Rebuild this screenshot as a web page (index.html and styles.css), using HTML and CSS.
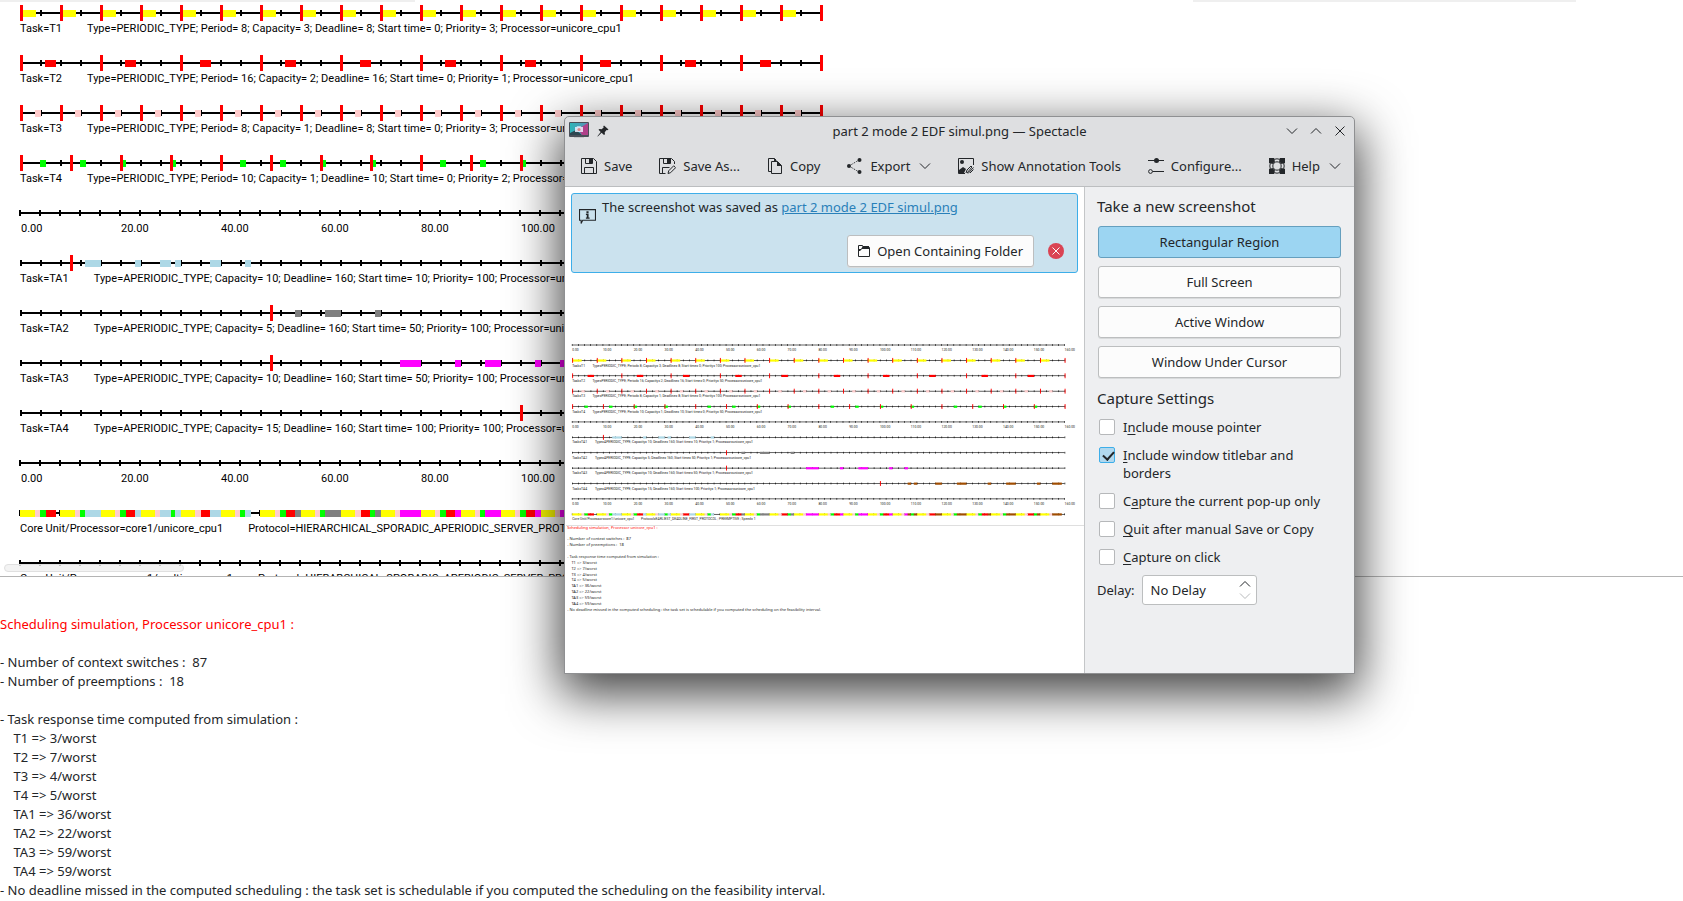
FILE: index.html
```html
<!DOCTYPE html>
<html lang="en">
<head>
<meta charset="utf-8">
<title>Scheduling simulation</title>
<link rel="stylesheet" href="styles.css">
</head>
<body>
<main class="desktop">
  <section class="chart-pane" aria-label="Scheduling chart">
    <div class="top-strip"><span class="strip-left"></span><span class="strip-right"></span></div>
    <div class="chart" id="chart"></div>
    <div class="scroll-thumb"></div>
  </section>
  <section class="report" aria-label="Simulation report">
    <p class="report-title">Scheduling simulation, Processor unicore_cpu1 :</p>
    <pre class="report-text" id="report">
- Number of context switches :  87
- Number of preemptions :  18

- Task response time computed from simulation :
    T1 =&gt; 3/worst
    T2 =&gt; 7/worst
    T3 =&gt; 4/worst
    T4 =&gt; 5/worst
    TA1 =&gt; 36/worst
    TA2 =&gt; 22/worst
    TA3 =&gt; 59/worst
    TA4 =&gt; 59/worst
- No deadline missed in the computed scheduling : the task set is schedulable if you computed the scheduling on the feasibility interval.</pre>
  </section>

  <div class="window" role="dialog" aria-label="Spectacle">
    <header class="titlebar">
      <div class="title-side">
        <svg class="app-icon" viewBox="0 0 20 17" aria-hidden="true">
          <defs><linearGradient id="sky" x1="0" x2="1"><stop offset="0" stop-color="#2fb5b8"/><stop offset="1" stop-color="#5a8fb5"/></linearGradient></defs>
          <rect x="5" y="14" width="10" height="2" fill="#c4c6c8"/>
          <rect width="20" height="15" rx="1" fill="#4a4f58"/>
          <rect x="1" y="1" width="18" height="12" fill="url(#sky)"/>
          <path d="M1 13V11L7 8l6 5z" fill="#2d4650"/><path d="M19 1v12h-6L9 7z" fill="#b0408a"/>
          <path d="M6 5h1.500l.6-.8h3.600l.6.800H14v5H6z" fill="#eef" opacity=".85"/><circle cx="10" cy="7.500" r="1.600" fill="#d88"/>
        </svg>
        <svg class="pin-icon" viewBox="0 0 12 12" aria-hidden="true"><path d="M7 0.500L11.500 4.500 10.300 5.300 9.600 5 7.700 7.300 8 9.300 7 10 4.600 7.800 0.800 11.500 0.400 11.200 3.700 7 1.500 4.800 2.500 4 4.700 4.300 6.800 2.300 6.200 1.400z" fill="#232629"/></svg>
      </div>
      <h1 class="title">part 2 mode 2 EDF simul.png — Spectacle</h1>
      <div class="title-buttons">
        <button type="button" aria-label="Minimize"><svg viewBox="0 0 12 12"><path d="M1 3.500l5 5 5-5"/></svg></button>
        <button type="button" aria-label="Maximize"><svg viewBox="0 0 12 12"><path d="M1 8.500l5-5 5 5"/></svg></button>
        <button type="button" aria-label="Close"><svg viewBox="0 0 12 12"><path d="M1.500 1.500l9 9M10.500 1.500l-9 9"/></svg></button>
      </div>
    </header>
    <nav class="toolbar">
      <button type="button"><svg viewBox="0 0 16 16"><path d="M.5.5h12l3 3v12H.5zM4.500.5v5h7v-5M3.500 15.500v-6h9v6"/><path class="solid" d="M8 1h3v4H8z"/></svg>Save</button>
      <button type="button"><svg viewBox="0 0 17 16"><path d="M6.500 15.500H.5V.5h12l3 3V6M4.500.5v5h7v-5M3.500 15.500v-6h7M9 15.500l.7-2.700 5-5 1.900 1.900-5 5z"/><path class="solid" d="M8 1h3v4H8z"/></svg>Save As...</button>
      <button type="button"><svg viewBox="0 0 16 16"><path d="M4.500 13.500H1.500V.5h6l1.500 1.500M4.500 3.500h6l4 4v8h-10z"/><path class="solid" d="M10 3l5 5h-5zM7 0l3 3H7z"/></svg>Copy</button>
      <button type="button"><svg viewBox="0 0 16 16"><path class="dots" d="M2 8L12 2M2 8l10 6"/><circle class="solid" cx="2" cy="8" r="2"/><circle class="solid" cx="12.500" cy="2" r="2"/><circle class="solid" cx="12.500" cy="14" r="2"/></svg>Export<svg class="chevron" viewBox="0 0 12 12"><path d="M1 3.500l5 5 5-5"/></svg></button>
      <button type="button"><svg viewBox="0 0 16 16"><path d="M7 15.500H.5V.5h15V7"/><circle class="solid" cx="4" cy="4" r="2"/><path class="solid" d="M1 15v-3l4-3 3 2-2 4z"/><path d="M8 15l1-3 4-4 1 1-5 6M10 15.500l5.500-6M12 15l3.500-3.500"/></svg>Show Annotation Tools</button>
      <button type="button"><svg viewBox="0 0 16 16"><path d="M0 2.500h16M4.500 13.500H16"/><circle class="solid" cx="8.500" cy="2.500" r="2.500"/><circle cx="2.500" cy="13.500" r="1.900"/></svg>Configure...</button>
      <button type="button"><svg viewBox="0 0 16 16"><circle cx="8" cy="8" r="7.200"/><circle cx="8" cy="8" r="4.200"/><path class="solid" d="M0 0h5l1 3.500L3.500 6 0 5zM16 0v5l-3.500 1L10 3.500 11 0zM0 16v-5l3.500-1L6 12.500 5 16zM16 16h-5l-1-3.500L12.500 10l3.500 1z"/></svg>Help<svg class="chevron" viewBox="0 0 12 12"><path d="M1 3.500l5 5 5-5"/></svg></button>
    </nav>
    <div class="window-body">
      <div class="preview">
        <div class="banner">
          <svg class="info-icon" viewBox="0 0 16 16" aria-hidden="true"><path d="M.5 1.500h15v10h-12l-1.500 3V11.500H.5z" fill="none" stroke="#232629"/><path d="M7 3h2v2H7zM6.500 5.500H9V9h1v1H6.500V9h.8V6.500h-.8z" fill="#232629"/></svg>
          <div class="banner-main">
            <p class="banner-text">The screenshot was saved as <a href="#">part 2 mode 2 EDF simul.png</a></p>
            <div class="banner-actions">
              <button type="button" class="push folder-button"><svg viewBox="0 0 12 12" aria-hidden="true"><path d="M.5.5h4l1 2h6v9H.5z" fill="none" stroke="#232629"/><path d="M5 1h6v3H4L2 6H0V4h3z" fill="#232629"/></svg>Open Containing Folder</button>
              <button type="button" class="dismiss" aria-label="Close message"><svg viewBox="0 0 16 16"><circle cx="8" cy="8" r="8" fill="#da4453"/><path d="M4.500 4.500l7 7M11.500 4.500l-7 7" stroke="#fcfcfc"/></svg></button>
            </div>
          </div>
        </div>
        <div class="thumbnail" id="thumbnail"></div>
      </div>
      <aside class="sidebar">
        <h2>Take a new screenshot</h2>
        <div class="modes">
          <button type="button" class="push selected">Rectangular Region</button>
          <button type="button" class="push">Full Screen</button>
          <button type="button" class="push">Active Window</button>
          <button type="button" class="push">Window Under Cursor</button>
        </div>
        <h2>Capture Settings</h2>
        <div class="options">
          <label><input type="checkbox"><span>I<u>n</u>clude mouse pointer</span></label>
          <label><input type="checkbox" checked><span><u>I</u>nclude window titlebar and borders</span></label>
          <label><input type="checkbox"><span>C<u>a</u>pture the current pop-up only</span></label>
          <label><input type="checkbox"><span><u>Q</u>uit after manual Save or Copy</span></label>
          <label><input type="checkbox"><span><u>C</u>apture on click</span></label>
        </div>
        <div class="delay">
          <label for="delay">Delay:</label>
          <div class="spin">
            <input id="delay" type="text" value="No Delay">
            <div class="spin-buttons">
              <button type="button" aria-label="Increase"><svg viewBox="0 0 12 8"><path d="M1 6.500l5-5 5 5"/></svg></button>
              <button type="button" aria-label="Decrease" disabled><svg viewBox="0 0 12 8"><path d="M1 1.500l5 5 5-5"/></svg></button>
            </div>
          </div>
        </div>
      </aside>
    </div>
  </div>
</main>
<script src="chart.js"></script>
</body>
</html>
```
FILE: styles.css
```css
* { box-sizing: border-box; }

body {
  margin: 0;
  background: #fff;
  color: #232629;
  font: 13px/18px "Noto Sans", "Open Sans", sans-serif;
}

h1, h2, p, pre { margin: 0; font: inherit; }

button, input { font: inherit; color: inherit; }

button { padding: 0; border: 0; background: none; }

svg { display: block; flex: none; }

.desktop {
  position: relative;
  min-height: 100vh;
  overflow: hidden;
}

/* Chart pane */
.chart-pane {
  position: relative;
  height: 577px;
  overflow: hidden;
  border-bottom: 1px solid #b4b4b4;
}

.top-strip {
  display: flex;
  justify-content: space-between;
  height: 2px;
  padding-right: 107px;
}

.strip-left { width: 415px; background: #efefef; }
.strip-right { width: 383px; background: #efefef; }

.chart { color: #000; font: 11px/16px Roboto, "Noto Sans", sans-serif; }

.row { height: 50px; }

.track { width: 100%; height: 19px; overflow: visible; shape-rendering: crispEdges; }

.caption {
  display: flex;
  gap: 25px;
  padding-left: 20px;
  white-space: nowrap;
}

.scale { display: flex; padding-left: 21px; }
.scale span { flex: 0 0 100px; }

.scroll-thumb {
  position: absolute;
  left: 4px;
  bottom: 4px;
  width: 180px;
  height: 8px;
  border: 1px solid #e0e0e0;
  border-radius: 4px;
  background: rgba(240, 240, 240, .8);
}

/* Report */
.report {
  padding: 38px 0 0 0;
  line-height: 19px;
}

.report-title { color: #f00; margin-bottom: 19px; }

/* Spectacle window */
.window {
  position: absolute;
  left: 564px;
  top: 116px;
  width: 791px;
  height: 558px;
  display: flex;
  flex-direction: column;
  border: 1px solid #8f9092;
  border-radius: 5px 5px 0 0;
  background: #dedfe1;
  box-shadow: 0 16px 50px 4px rgba(0, 0, 0, .75);
  background-clip: padding-box;
}

.titlebar {
  display: grid;
  grid-template-columns: 1fr auto 1fr;
  align-items: center;
  height: 27px;
  padding: 0 4px;
}

.title-side { display: flex; align-items: center; gap: 8px; }
.app-icon { width: 20px; height: 17px; }
.pin-icon { width: 12px; height: 12px; }

.title-buttons { display: flex; justify-content: flex-end; gap: 12px; padding-right: 4px; }

.title-buttons svg, .toolbar svg, .spin svg { fill: none; stroke: #232629; }
.title-buttons svg { width: 12px; height: 12px; }

.toolbar {
  display: flex;
  align-items: center;
  justify-content: space-between;
  height: 43px;
  padding: 2px 13px 0 16px;
  border-bottom: 1px solid #bcbec0;
  white-space: nowrap;
}

.toolbar button { display: flex; align-items: center; gap: 7px; }
.toolbar svg { height: 16px; }
.toolbar .chevron { width: 12px; height: 12px; }
.toolbar .chevron { margin-left: 2px; }
.toolbar .solid { fill: #232629; stroke: none; }
.toolbar .dots { stroke-dasharray: 1 1; }

.window-body { display: flex; flex: 1; min-height: 0; }

.preview {
  flex: 1;
  min-width: 0;
  display: flex;
  flex-direction: column;
  gap: 64px;
  padding-top: 6px;
  background: #fff;
}

.banner {
  display: flex;
  align-items: flex-start;
  gap: 6px;
  height: 80px;
  margin: 0 6px;
  padding: 4px 13px 4px 7px;
  border: 1px solid #3daee9;
  border-radius: 3px;
  background: #cbe2ee;
}

.info-icon { width: 17px; height: 17px; margin-top: 10px; }
.banner-main { flex: 1; display: flex; flex-direction: column; gap: 19px; }
.banner-text a { color: #2980b9; }
.banner-actions { display: flex; justify-content: flex-end; align-items: center; gap: 14px; }

.push {
  height: 32px;
  border: 1px solid #bcbebf;
  border-radius: 3px;
  background: #fcfcfc;
  box-shadow: 0 1px 0 #d8dadb;
}

.folder-button { display: flex; align-items: center; gap: 7px; padding: 0 10px; }
.folder-button svg { width: 12px; height: 12px; }
.dismiss svg { width: 16px; height: 16px; }

.thumbnail { padding-left: 1px; }
.thumbnail svg { width: 100%; height: auto; }
.thumbnail text { fill: #222; white-space: pre; }
.small-text { font: 11px Roboto, "Noto Sans", sans-serif; }
.report-line { font: 13px "Noto Sans", sans-serif; }
.thumbnail .alert { fill: #f00; }

.sidebar {
  width: 270px;
  padding: 9px 12px 0;
  border-left: 1px solid #c4c6c8;
  background: #eeeff1;
}

.sidebar h2 { font-size: 15px; line-height: 20px; }

.modes { display: flex; flex-direction: column; gap: 8px; margin: 10px 1px 10px; }

.push.selected { border-color: #659fbe; background: #9cd5f2; box-shadow: none; }

.options { display: flex; flex-direction: column; gap: 10px; margin-top: 10px; }
.options label { display: flex; gap: 8px; margin-left: 2px; }
.options u { text-underline-offset: 2px; }

.options input {
  appearance: none;
  flex: none;
  width: 16px;
  height: 16px;
  margin: 1px 0 0;
  border: 1px solid #b6b8ba;
  border-radius: 2px;
  background: #fff;
}

.options input:checked {
  border-color: #3daee9;
  background: #b1d8ee;
}

.options input:checked::after {
  content: "";
  display: block;
  width: 5px;
  height: 9px;
  margin: 1px 0 0 5px;
  border: solid #232629;
  border-width: 0 2px 2px 0;
  transform: rotate(42deg);
}

.delay { display: flex; align-items: center; gap: 7px; margin-top: 9px; }

.spin {
  display: flex;
  width: 115px;
  height: 30px;
  padding: 0 5px 0 8px;
  border: 1px solid #bcbebf;
  border-radius: 3px;
  background: #fff;
}

.spin input { flex: 1; min-width: 0; padding: 0; border: 0; background: none; outline: 0; }
.spin-buttons { display: flex; flex-direction: column; justify-content: center; gap: 4px; }
.spin svg { width: 12px; height: 8px; }
.spin button:disabled svg { stroke: #b8babc; }
```
FILE: chart.js
```js
const COLORS = { Y: '#ffff00', P: '#ffcccc', G: '#00ff00', R: '#ff0000', B: '#add8e6', A: '#808080', M: '#ff00ff', N: '#a04d00' };
const END = 160;
const every = (step, from, to) => {
  const out = [];
  for (let t = from; t <= to; t += step) out.push(t);
  return out;
};

const TASKS = {
  T1: { color: 'Y', marks: every(8, 0, END), runs: every(8, 0, 152).map(t => [t, 3]) },
  T2: { color: 'R', marks: every(16, 0, END), runs: [5, 21, 36, 53, 68, 85, 101, 116, 133, 148].map(t => [t, 2]) },
  T3: { color: 'P', marks: every(8, 0, END), runs: every(8, 3, 155).map(t => [t, 1]) },
  T4: { color: 'G', marks: every(10, 0, END), runs: [4, 12, 20, 30, 44, 52, 60, 70, 84, 92, 100, 110, 124, 132, 140, 150].map(t => [t, 1]) },
  TA1: { color: 'B', marks: [10], runs: [[13, 3], [23, 1], [28, 2], [31, 1], [38, 2], [45, 1]] },
  TA2: { color: 'A', marks: [50], runs: [[55, 1], [61, 3], [71, 1]] },
  TA3: { color: 'M', marks: [50], runs: [[76, 4], [87, 1], [93, 3], [103, 1], [108, 1]] },
  TA4: { color: 'N', marks: [100], runs: [[109, 1], [111, 1], [118, 2], [125, 3], [135, 1], [141, 3], [151, 1], [156, 3]] }
};
const NAMES = Object.keys(TASKS);

// Bars, ticks and release marks of one line; y is the centre of the line.
function line(y, unit, tickStep, name) {
  const task = TASKS[name];
  const shift = task ? 1 : 0;
  const rect = (x, top, w, h, fill) => `<rect x="${x}" y="${top}" width="${w}" height="${h}" fill="${fill}"/>`;
  let s = rect(20, y - 1, END * unit, 2, '#000');
  for (const t of every(tickStep, 0, END)) s += rect(19 + shift + t * unit, y - 3, 2, 6, '#000');
  const bars = task ? [name] : name === 'core' ? NAMES : [];
  for (const n of bars) {
    for (const [t, len] of TASKS[n].runs) s += rect(20 + t * unit, y - 3, len * unit + 1, 7, COLORS[TASKS[n].color]);
  }
  if (task) for (const t of task.marks) s += rect(20 + t * unit, y - 8, 3, 16, '#ff0000');
  return s;
}

const P = (n, period, cap, prio) => [n, `Type=PERIODIC_TYPE; Period= ${period}; Capacity= ${cap}; Deadline= ${period}; Start time= 0; Priority= ${prio}; Processor=unicore_cpu1`];
const A = (n, cap, start, prio) => [n, `Type=APERIODIC_TYPE; Capacity= ${cap}; Deadline= 160; Start time= ${start}; Priority= ${prio}; Processor=unicore_cpu1`];
const PROTOCOL = 'Protocol=HIERARCHICAL_SPORADIC_APERIODIC_SERVER_PROTOCOL';

const rows = [
  P('T1', 8, 3, 3), P('T2', 16, 2, 1), P('T3', 8, 1, 3), P('T4', 10, 1, 2), ['scale'],
  A('TA1', 10, 10, 100), A('TA2', 5, 50, 100), A('TA3', 10, 50, 100), A('TA4', 15, 100, 100), ['scale'],
  ['core', PROTOCOL, 'Core Unit/Processor=core1/unicore_cpu1'],
  ['idle', PROTOCOL, 'Core Unit/Processor=core1/multicore_cpu1']
];

document.getElementById('chart').innerHTML = rows.map(([name, text, head]) => {
  const label = name === 'scale'
    ? `<div class="scale">${every(20, 0, END).map(t => `<span>${t}.00</span>`).join('')}</div>`
    : `<div class="caption"><span>${head || 'Task=' + name}</span><span>${text}</span></div>`;
  return `<div class="row"><svg class="track" aria-hidden="true">${line(11, 5, 4, name)}</svg>${label}</div>`;
}).join('');

// Preview of the saved picture, at ten units of width per time unit.
const small = [
  ['scale'], P('T1', 8, 3, 100), P('T2', 16, 2, 50), P('T3', 8, 1, 100), P('T4', 10, 1, 50), ['scale'],
  A('TA1', 10, 10, 1), A('TA2', 5, 50, 1), A('TA3', 10, 50, 1), A('TA4', 15, 100, 1), ['scale'],
  ['core', 'Protocol=EARLIEST_DEADLINE_FIRST_PROTOCOL ; PREEMPTIVE ; Speed= 1', 'Core Unit/Processor=core1/unicore_cpu1']
];
let svg = '';
small.forEach(([name, text, head], i) => {
  const y = 26 + i * 50;
  svg += line(y, 10, 2, name);
  if (name === 'scale') {
    for (const t of every(10, 0, END)) svg += `<text class="small-text" x="${20 + t * 10}" y="${y + 20}">${t}.00</text>`;
  } else {
    const x = head ? 244 : name.length > 2 ? 94 : 86;
    svg += `<text class="small-text" x="20" y="${y + 20}">${head || 'Task=' + name}</text><text class="small-text" x="${x}" y="${y + 20}">${text}</text>`;
  }
});
svg += '<rect x="0" y="611" width="1683" height="3" fill="#ddd"/>';
const reportLines = document.getElementById('report').textContent.trim().split('\n');
svg += '<text class="report-line alert" x="4" y="624">Scheduling simulation, Processor unicore_cpu1 :</text>';
reportLines.forEach((l, i) => { svg += `<text class="report-line" x="4" y="${661 + i * 19}">${l.replace('>', '&gt;')}</text>`; });
document.getElementById('thumbnail').innerHTML = `<svg viewBox="0 0 1683 910" role="img" aria-label="Saved screenshot">${svg}</svg>`;
```
